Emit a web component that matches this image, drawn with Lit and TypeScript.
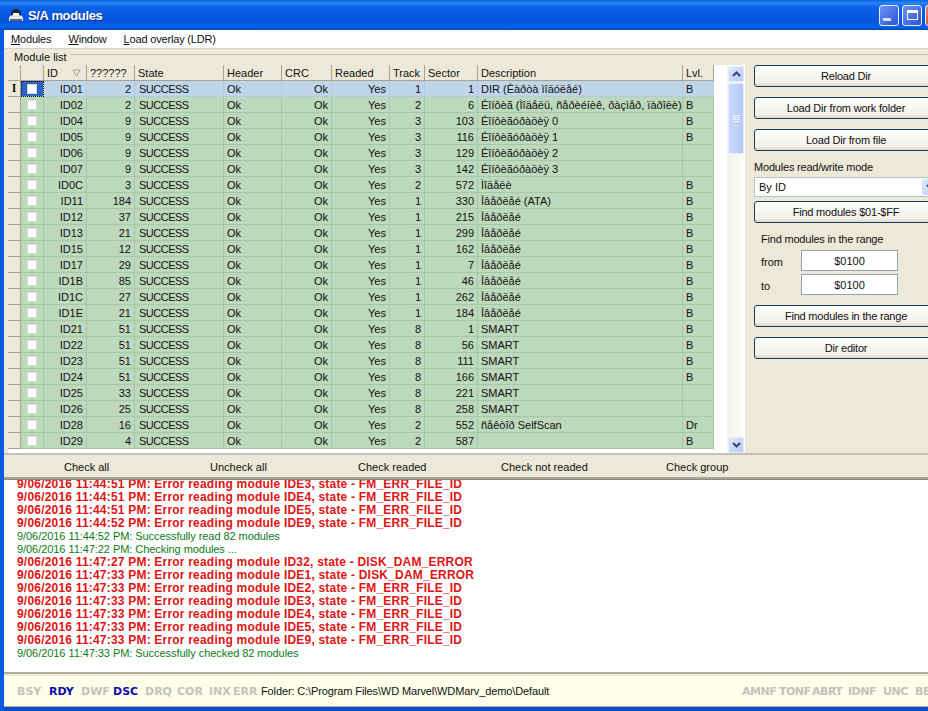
// app.ts
// S/A modules window: module grid, action panel, log and ATA status bar

import { LitElement, html, css } from 'lit';
import { customElement } from 'lit/decorators.js';

const COLUMNS = [
  { label: '', width: 13, cls: 'fixed' },
  { label: '', width: 23, cls: 'check' },
  { label: 'ID', width: 43, cls: 'right' },
  { label: '??????', width: 48, cls: 'right' },
  { label: 'State', width: 89, cls: '' },
  { label: 'Header', width: 58, cls: '' },
  { label: 'CRC', width: 50, cls: 'right' },
  { label: 'Readed', width: 58, cls: 'right' },
  { label: 'Track', width: 35, cls: 'right' },
  { label: 'Sector', width: 53, cls: 'right' },
  { label: 'Description', width: 205, cls: '' },
  { label: 'Lvl.', width: 31, cls: '' },
];

const CFG = 'Êîíôèãóðàöèÿ';
const OVL = 'Îâåðëåé';

const ROWS: [string, number, number, number, string, string][] = [
  ['ID01', 2, 1, 1, 'DIR (Êàðòà ìîäóëåé)', 'B'],
  ['ID02', 2, 2, 6, 'Êîíôèã (Ìîäåëü, ñåðèéíèê, ðàçìåð, ïàðîëè)', 'B'],
  ['ID04', 9, 3, 103, `${CFG} 0`, 'B'],
  ['ID05', 9, 3, 116, `${CFG} 1`, 'B'],
  ['ID06', 9, 3, 129, `${CFG} 2`, ''],
  ['ID07', 9, 3, 142, `${CFG} 3`, ''],
  ['ID0C', 3, 2, 572, 'Ìîäåëè', 'B'],
  ['ID11', 184, 1, 330, `${OVL} (ATA)`, 'B'],
  ['ID12', 37, 1, 215, OVL, 'B'],
  ['ID13', 21, 1, 299, OVL, 'B'],
  ['ID15', 12, 1, 162, OVL, 'B'],
  ['ID17', 29, 1, 7, OVL, 'B'],
  ['ID1B', 85, 1, 46, OVL, 'B'],
  ['ID1C', 27, 1, 262, OVL, 'B'],
  ['ID1E', 21, 1, 184, OVL, 'B'],
  ['ID21', 51, 8, 1, 'SMART', 'B'],
  ['ID22', 51, 8, 56, 'SMART', 'B'],
  ['ID23', 51, 8, 111, 'SMART', 'B'],
  ['ID24', 51, 8, 166, 'SMART', 'B'],
  ['ID25', 33, 8, 221, 'SMART', ''],
  ['ID26', 25, 8, 258, 'SMART', ''],
  ['ID28', 16, 2, 552, 'ñåêòîð SelfScan', 'Dr'],
  ['ID29', 4, 2, 587, '', 'B'],
];

const err = (time: string, mod: string, state: string) => ({
  cls: 'err',
  text: `9/06/2016 ${time} PM: Error reading module ${mod}, state - ${state}`,
});
const ok = (time: string, msg: string) => ({ cls: 'ok', text: `9/06/2016 ${time} PM: ${msg}` });

const LOG = [
  err('11:44:51', 'IDE3', 'FM_ERR_FILE_ID'),
  err('11:44:51', 'IDE4', 'FM_ERR_FILE_ID'),
  err('11:44:51', 'IDE5', 'FM_ERR_FILE_ID'),
  err('11:44:52', 'IDE9', 'FM_ERR_FILE_ID'),
  ok('11:44:52', 'Successfully read 82 modules'),
  ok('11:47:22', 'Checking modules ...'),
  err('11:47:27', 'ID32', 'DISK_DAM_ERROR'),
  err('11:47:33', 'IDE1', 'DISK_DAM_ERROR'),
  err('11:47:33', 'IDE2', 'FM_ERR_FILE_ID'),
  err('11:47:33', 'IDE3', 'FM_ERR_FILE_ID'),
  err('11:47:33', 'IDE4', 'FM_ERR_FILE_ID'),
  err('11:47:33', 'IDE5', 'FM_ERR_FILE_ID'),
  err('11:47:33', 'IDE9', 'FM_ERR_FILE_ID'),
  ok('11:47:33', 'Successfully checked 82 modules'),
];

const LEFT_FLAGS = [
  { t: 'BSY', w: 32 },
  { t: 'RDY', w: 32, on: true },
  { t: 'DWF', w: 32 },
  { t: 'DSC', w: 32, on: true },
  { t: 'DRQ', w: 32 },
  { t: 'COR', w: 32 },
  { t: 'INX', w: 24 },
  { t: 'ERR', w: 28 },
];
const RIGHT_FLAGS = [
  { t: 'AMNF', w: 37 },
  { t: 'TONF', w: 33 },
  { t: 'ABRT', w: 36 },
  { t: 'IDNF', w: 35 },
  { t: 'UNC', w: 32 },
  { t: 'BB', w: 20 },
];

@customElement('app-root')
export class AppRoot extends LitElement {
  static styles = css`
    :host {
      display: block;
      width: 928px;
      height: 711px;
      overflow: hidden;
      font-family: 'Liberation Sans', Arial, sans-serif;
      font-size: 11px;
      color: #111;
      background: #0a5ce0;
    }

    .window {
      display: flex;
      flex-direction: column;
      height: 707px;
      border-bottom: 4px solid #0b4fc8;
      margin-left: 4px;
      background: #ece9d8;
    }

    .title {
      flex: 0 0 30px;
      margin-left: -4px;
      display: flex;
      align-items: center;
      padding-left: 8px;
      background: linear-gradient(#0a5fe6 0, #2a87f2 3px, #0a62e8 7px, #0454dc 20px, #0563ea 27px, #0348b8 30px);
      color: #fff;
      font-size: 13px;
      font-weight: bold;
      letter-spacing: -0.35px;
      text-shadow: 1px 1px 0 #0a2f90;
    }
    .title svg.app {
      margin-right: 4px;
    }
    .title .name {
      flex: 1;
    }
    .wbtn {
      width: 20px;
      height: 21px;
      margin-right: 3px;
      box-sizing: border-box;
      border: 1px solid #e8eefc;
      border-radius: 3px;
      background: linear-gradient(135deg, #6f93ee, #2a55d8);
      display: flex;
      align-items: center;
      justify-content: center;
    }
    .wbtn.close {
      flex: 0 0 20px;
      margin-right: -17px;
      background: linear-gradient(135deg, #e8866a, #c8351a);
    }
    .min-mark {
      width: 8px;
      height: 3px;
      margin-top: 9px;
      margin-right: 5px;
      background: #d7e2fb;
    }
    .max-mark {
      width: 11px;
      height: 10px;
      box-sizing: border-box;
      border: 1px solid #fff;
      border-top-width: 3px;
    }

    .menu {
      flex: 0 0 19px;
      display: flex;
      align-items: center;
      gap: 17px;
      padding-left: 7px;
      background: #fff;
      border-bottom: 1px solid #d8d4c4;
      box-sizing: border-box;
      letter-spacing: -0.17px;
    }
    .menu u {
      text-decoration: underline;
    }

    .main {
      flex: 0 0 405px;
      display: flex;
      flex-direction: column;
    }
    .legend {
      flex: 0 0 16px;
      display: flex;
      align-items: center;
      padding-left: 10px;
      gap: 3px;
    }
    .legend::after {
      content: '';
      flex: 1;
      margin-top: -5px;
      border-top: 1px solid #c8c4b4;
    }

    .content {
      flex: 1;
      display: flex;
    }
    .grid-wrap {
      flex: 0 0 737px;
      margin-left: 4px;
      display: flex;
      background: #fff;
      height: 388px;
    }
    .grid-area {
      flex: 0 0 719px;
      overflow: hidden;
    }
    table {
      border-collapse: separate;
      border-spacing: 0;
      table-layout: fixed;
      width: 706px;
    }
    th,
    td {
      box-sizing: border-box;
      height: 16px;
      padding: 0 3px;
      white-space: nowrap;
      overflow: hidden;
      font-weight: normal;
      text-align: left;
      border-right: 1px solid #a9c6a8;
      border-bottom: 1px solid #a9c6a8;
      background: #bdd9bc;
    }
    th {
      background: #ece9d8;
      border-right: 1px solid #a5a290;
      border-bottom: 1px solid #a5a290;
    }
    th.first-id {
      position: relative;
    }
    .sort {
      position: absolute;
      top: 4px;
      right: 5px;
    }
    td.right {
      text-align: right;
    }
    td.state {
      padding-left: 4px;
      letter-spacing: -0.5px;
    }
    td.fixed {
      background: #ece9d8;
      border-right: 1px solid #a5a290;
      border-bottom: 1px solid #a5a290;
      padding: 0;
      text-align: center;
      font-family: 'Liberation Serif', serif;
      font-weight: bold;
      font-size: 12px;
    }
    td.check {
      padding: 0 0 0 6px;
    }
    tr.current td:not(.fixed) {
      background: #bfd6ea;
      border-color: #b4cbdf;
    }
    tr.current td.check {
      background: #2f62c4;
      outline: 1px dotted #111;
      outline-offset: -1px;
    }
    .box {
      display: block;
      width: 10px;
      height: 10px;
      background: #fff;
      border: 1px solid #d5e0d2;
      box-sizing: border-box;
    }

    .scrollbar {
      flex: 0 0 18px;
      margin-top: 1px;
      display: flex;
      flex-direction: column;
      background: linear-gradient(90deg, #f3f1ea, #fefefe);
    }
    .arrow {
      flex: 0 0 16px;
      box-sizing: border-box;
      margin: 0 1px;
      border: 1px solid #e6ecfb;
      border-radius: 2px;
      background: linear-gradient(135deg, #dfe8fd, #b6c9f5);
      display: flex;
      align-items: center;
      justify-content: center;
    }
    .thumb {
      flex: 0 0 71px;
      margin: 1px 1px 0;
      box-sizing: border-box;
      border: 1px solid #e6ecfb;
      border-radius: 2px;
      background: linear-gradient(90deg, #c9d8fb, #b4c8f8);
      display: flex;
      flex-direction: column;
      align-items: center;
      justify-content: center;
      gap: 1px;
    }
    .thumb i {
      display: block;
      width: 7px;
      height: 1px;
      background: #eef3fe;
    }
    .track {
      flex: 1;
    }

    .panel {
      flex: 1;
      overflow: hidden;
      padding-left: 9px;
      display: flex;
      flex-direction: column;
    }
    .btn {
      flex: 0 0 22px;
      width: 190px;
      box-sizing: border-box;
      display: flex;
      align-items: center;
      justify-content: center;
      padding-right: 6px;
      letter-spacing: -0.2px;
      border: 1px solid #1f3a5c;
      border-radius: 3px;
      background: linear-gradient(#fff, #f2f1ea 80%, #dcd8c8);
    }
    .gap10 {
      margin-top: 10px;
    }
    .gap4 {
      margin-top: 4px;
    }
    .mode-label {
      margin-top: 8px;
      height: 16px;
      line-height: 16px;
      letter-spacing: -0.2px;
    }
    .combo {
      flex: 0 0 20px;
      margin-top: 2px;
      width: 190px;
      box-sizing: border-box;
      display: flex;
      align-items: center;
      padding-left: 4px;
      background: #fff;
      border: 1px solid #b5c3cf;
      position: relative;
    }
    .combo-arrow {
      position: absolute;
      top: 1px;
      left: 167px;
      width: 17px;
      height: 16px;
      border-radius: 2px;
      background: linear-gradient(135deg, #dfe8fd, #b6c9f5);
      display: flex;
      align-items: center;
      justify-content: center;
    }
    .range {
      padding: 9px 0 0 7px;
      flex: 0 0 72px;
      box-sizing: border-box;
      display: grid;
      grid-template-columns: 40px 97px;
      grid-template-rows: 18px 24px 21px;
      align-content: start;
    }
    .range-title {
      grid-column: 1 / 3;
      line-height: 14px;
      letter-spacing: -0.2px;
    }
    .range-label {
      display: flex;
      align-items: center;
      height: 24px;
    }
    .range-input {
      height: 21px;
      box-sizing: border-box;
      display: flex;
      align-items: center;
      justify-content: center;
      background: #fff;
      border: 1px solid #93a5b5;
    }

    .bar {
      flex: 0 0 26px;
      display: flex;
      align-items: center;
      box-sizing: border-box;
      border-top: 2px solid #c4c2b6;
      border-bottom: 2px solid #a9a696;
      margin-top: -1px;
      padding-left: 60px;
      padding-top: 1px;
    }
    .bar span {
      flex: none;
    }

    .log {
      flex: 0 0 195px;
      overflow: hidden;
      background: #fff;
      border-top: 1px solid #8c8a7e;
      border-bottom: 2px solid #b0ad9e;
      box-sizing: border-box;
      padding-left: 13px;
    }
    .log-inner {
      margin-top: -2px;
    }
    .line {
      height: 13px;
      line-height: 13px;
      white-space: nowrap;
    }
    .line.err {
      color: #e01414;
      font-weight: bold;
      font-size: 12px;
      letter-spacing: 0.2px;
    }
    .line.ok {
      color: #0c7a18;
      font-size: 11px;
      letter-spacing: -0.06px;
    }

    .status {
      flex: 1;
      display: flex;
      align-items: center;
      margin-top: 2px;
      padding-left: 13px;
      background: #fffeea;
      border-bottom: 1px solid #b0ad9e;
      overflow: hidden;
      position: relative;
    }
    .flag {
      flex: none;
      font-family: 'DejaVu Sans', sans-serif;
      font-weight: bold;
      font-size: 11px;
      color: #c2c2bc;
      white-space: nowrap;
    }
    .flag.on {
      color: #0a0aa8;
    }
    .flag.tight {
      letter-spacing: -0.5px;
    }
    .folder {
      flex: 0 0 481px;
      white-space: nowrap;
      letter-spacing: -0.12px;
    }
  `;

  private renderGrid() {
    return html`
      <table>
        <colgroup>${COLUMNS.map((c) => html`<col style="width:${c.width}px" />`)}</colgroup>
        <thead>
          <tr>
            ${COLUMNS.map((c, i) =>
              i === 2
                ? html`<th class="first-id">
                    ${c.label}
                    <svg class="sort" width="9" height="8" viewBox="0 0 9 8">
                      <path d="M1 1h7L4.5 7z" fill="none" stroke="#a5a290" />
                    </svg>
                  </th>`
                : html`<th>${c.label}</th>`
            )}
          </tr>
        </thead>
        <tbody>
          ${ROWS.map(
            ([id, size, track, sector, desc, lvl], i) => html`
              <tr class=${i === 0 ? 'current' : ''}>
                <td class="fixed">${i === 0 ? 'I' : ''}</td>
                <td class="check"><span class="box"></span></td>
                <td class="right">${id}</td>
                <td class="right">${size}</td>
                <td class="state">SUCCESS</td>
                <td>Ok</td>
                <td class="right">Ok</td>
                <td class="right">Yes</td>
                <td class="right">${track}</td>
                <td class="right">${sector}</td>
                <td>${desc}</td>
                <td>${lvl}</td>
              </tr>
            `
          )}
        </tbody>
      </table>
    `;
  }

  private chevron(up: boolean) {
    return html`<svg width="9" height="6" viewBox="0 0 9 6">
      <path d=${up ? 'M1 5l3.5-3.5L8 5' : 'M1 1l3.5 3.5L8 1'} fill="none" stroke="#34486e" stroke-width="2" />
    </svg>`;
  }

  render() {
    return html`
      <div class="window">
        <div class="title">
          <svg class="app" width="16" height="16" viewBox="0 0 16 16">
            <path d="M1 11c0-2 2-3 7-3s7 1 7 3v3H1z" fill="#dfe6ee" />
            <path d="M3 8c0-4 2-6 5-6s5 2 5 6z" fill="#20242c" />
            <rect x="5" y="6" width="6" height="3" fill="#f4f4f4" />
            <rect x="2" y="12" width="12" height="2" fill="#5d6470" />
          </svg>
          <span class="name">S/A modules</span>
          <div class="wbtn"><div class="min-mark"></div></div>
          <div class="wbtn"><div class="max-mark"></div></div>
          <div class="wbtn close"></div>
        </div>

        <div class="menu">
          <span><u>M</u>odules</span>
          <span><u>W</u>indow</span>
          <span><u>L</u>oad overlay (LDR)</span>
        </div>

        <div class="main">
          <div class="legend">Module list</div>
          <div class="content">
            <div class="grid-wrap">
              <div class="grid-area">${this.renderGrid()}</div>
              <div class="scrollbar">
                <div class="arrow">${this.chevron(true)}</div>
                <div class="thumb"><i></i><i></i><i></i><i></i></div>
                <div class="track"></div>
                <div class="arrow">${this.chevron(false)}</div>
              </div>
            </div>
            <div class="panel">
              <div class="btn">Reload Dir</div>
              <div class="btn gap10">Load Dir from work folder</div>
              <div class="btn gap10">Load Dir from file</div>
              <div class="mode-label">Modules read/write mode</div>
              <div class="combo">By ID<span class="combo-arrow">${this.chevron(false)}</span></div>
              <div class="btn gap4">Find modules $01-$FF</div>
              <div class="range">
                <div class="range-title">Find modules in the range</div>
                <div class="range-label">from</div>
                <div class="range-input">$0100</div>
                <div class="range-label">to</div>
                <div class="range-input">$0100</div>
              </div>
              <div class="btn gap10">Find modules in the range</div>
              <div class="btn gap10">Dir editor</div>
            </div>
          </div>
        </div>

        <div class="bar">
          <span style="width:146px">Check all</span>
          <span style="width:148px">Uncheck all</span>
          <span style="width:143px">Check readed</span>
          <span style="width:165px">Check not readed</span>
          <span>Check group</span>
        </div>

        <div class="log">
          <div class="log-inner">
            ${LOG.map((l) => html`<div class="line ${l.cls}">${l.text}</div>`)}
          </div>
        </div>

        <div class="status">
          ${LEFT_FLAGS.map(
            (f) => html`<span class="flag ${f.on ? 'on' : ''}" style="width:${f.w}px">${f.t}</span>`
          )}
          <span class="folder">Folder: C:\\Program Files\\WD Marvel\\WDMarv_demo\\Default</span>
          ${RIGHT_FLAGS.map((f) => html`<span class="flag tight" style="width:${f.w}px">${f.t}</span>`)}
        </div>
      </div>
    `;
  }
}

declare global {
  interface HTMLElementTagNameMap {
    'app-root': AppRoot;
  }
}
